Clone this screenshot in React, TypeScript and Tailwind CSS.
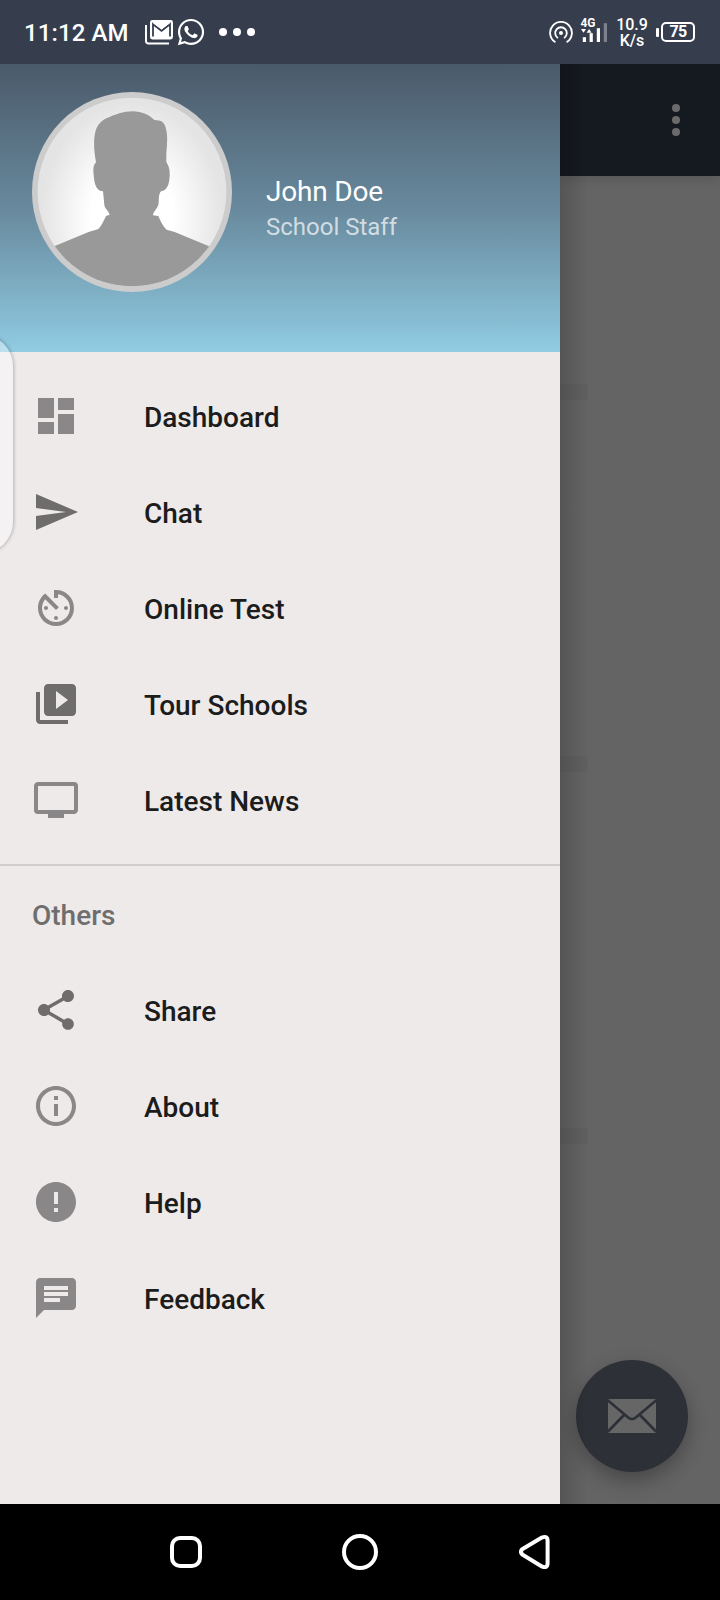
import type { IconType } from "react-icons";
import {
  MdAvTimer,
  MdChat,
  MdDashboard,
  MdError,
  MdInfoOutline,
  MdPersonalVideo,
  MdSend,
  MdShare,
  MdVideoLibrary,
} from "react-icons/md";
import { FaWhatsapp } from "react-icons/fa";

type Item = { label: string; icon: IconType; dark?: boolean };

const mainItems: Item[] = [
  { label: "Dashboard", icon: MdDashboard },
  { label: "Chat", icon: MdSend, dark: true },
  { label: "Online Test", icon: MdAvTimer },
  { label: "Tour Schools", icon: MdVideoLibrary, dark: true },
  { label: "Latest News", icon: MdPersonalVideo },
];

const otherItems: Item[] = [
  { label: "Share", icon: MdShare, dark: true },
  { label: "About", icon: MdInfoOutline },
  { label: "Help", icon: MdError },
  { label: "Feedback", icon: MdChat },
];

function MenuRow({ label, icon: Icon, dark }: Item) {
  return (
    <li className="flex h-24 items-center pl-8">
      <Icon className={dark ? "size-12 text-[#6e6d6c]" : "size-12 text-[#898787]"} />
      <span className="ml-16 pt-[3px] text-[28px] leading-8 font-medium text-[#1c1c1c]">{label}</span>
    </li>
  );
}

function StatusBar() {
  return (
    <header className="flex h-16 shrink-0 items-center bg-[#363e4e] text-white">
      <span className="ml-6 w-[106px] pt-[1px] text-[24px] leading-7 font-medium tracking-[0.1px] whitespace-nowrap">11:12 AM</span>
      <svg className="ml-[14px] h-7 w-[30px]" viewBox="0 0 30 28" fill="none">
        <path d="M2 7v16.2a2.3 2.3 0 0 0 2.3 2.3H25" stroke="currentColor" strokeWidth="2" />
        <rect x="6" y="2" width="23" height="19.4" rx="2.4" fill="currentColor" />
        <path d="M9 18.6V6.2l8.5 6.6L26 6.2v12.4" stroke="#363e4e" strokeWidth="1.8" />
        <path d="m9.2 4.8 8.3 6.2 8.3-6.2" stroke="currentColor" strokeWidth="1" />
      </svg>
      <FaWhatsapp className="ml-[2px] size-[30px]" />
      <svg className="ml-[13px] h-2 w-9" viewBox="0 0 36 8" fill="currentColor">
        <circle cx="4" cy="4" r="4" />
        <circle cx="18" cy="4" r="4" />
        <circle cx="32" cy="4" r="4" />
      </svg>
      <div className="ml-auto flex h-16 items-center pr-[25px]">
        <svg className="h-6 w-6" viewBox="0 0 24 24" fill="none" stroke="currentColor" strokeWidth="1.8" strokeLinecap="round">
          <circle cx="12" cy="13" r="2" fill="currentColor" stroke="none" />
          <path d="M8.4 17.6a5.8 5.8 0 1 1 7.2 0" />
          <path d="M5.8 21.8a10.9 10.9 0 1 1 12.4 0" />
        </svg>
        <svg className="ml-[7px] h-9 w-7" viewBox="0 0 28 36" fill="currentColor">
          <text x="0.5" y="13.2" fontSize="13" fontWeight="700" textLength="15" lengthAdjust="spacingAndGlyphs">4G</text>
          <path d="M1 15h5l-2.5 3.8zM6.6 18.8h5l-2.5-3.8z" />
          <rect x="2.8" y="23.2" width="3.2" height="4.8" />
          <rect x="9.6" y="19.2" width="3.2" height="8.8" />
          <rect x="16.8" y="14.2" width="3.2" height="13.8" />
          <rect x="23.8" y="9.2" width="3.2" height="18.8" opacity="0.35" />
        </svg>
        <div className="ml-[8px] w-8 pt-[1px] text-center text-[16px] leading-4 font-medium">
          <div>10.9</div>
          <div>K/s</div>
        </div>
        <span className="ml-2 h-[9px] w-[3px] rounded-[1px] bg-white" />
        <span className="ml-[2px] flex h-[20px] w-[34px] items-center justify-center rounded-[5px] border-2 border-white text-[16px] leading-4 font-bold tracking-[-0.8px]">
          75
        </span>
      </div>
    </header>
  );
}

function Avatar() {
  return (
    <svg className="size-[200px] shrink-0" viewBox="96 66 600 600">
      <defs>
        <radialGradient id="glow" gradientUnits="userSpaceOnUse" cx="396" cy="440" r="275" gradientTransform="translate(396 440) scale(1 1.25) translate(-396 -440)">
          <stop offset="0.45" stopColor="#ffffff" />
          <stop offset="1" stopColor="#e4e4e4" />
        </radialGradient>
        <clipPath id="disc">
          <circle cx="396" cy="366" r="283" />
        </clipPath>
      </defs>
      <circle cx="396" cy="366" r="300" fill="#cccccc" />
      <circle cx="396" cy="366" r="283" fill="url(#glow)" />
      <path
        clipPath="url(#disc)"
        fill="#999999"
        d="M398 124C425 124 449 136 463 150C484 151 493 155 498 176C504 200 501 225 499 250V276C507 289 510 300 509 318C508 345 500 362 483 364C474 374 478 391 475 405C470 419 460 424 459 436L475 438C482 455 489 470 500 479L524 486L640 534V680H150V534L264 487C276 482 287 481 295 477C306 466 312 450 318 438L329 434C325 421 314 416 313 405L309 364C291 362 285 347 282 326C280 301 277 289 288 277C283 250 280 220 284 196C288 170 300 154 319 145C345 134 370 124 398 124Z"
      />
    </svg>
  );
}

function DrawerHeader() {
  return (
    <div className="flex h-72 shrink-0 items-start bg-linear-to-b from-[#4a5a6a] via-[#68899d] to-[#90cce3] pt-7 pl-8">
      <Avatar />
      <div className="ml-[34px] pt-[83px]">
        <div className="text-[28px] leading-[34px] tracking-[-0.2px] text-white">John Doe</div>
        <div className="mt-[1px] text-[24px] leading-[34px] text-white/70">School Staff</div>
      </div>
    </div>
  );
}

function Strip() {
  return <div className="h-4 w-7 bg-[#606060]" />;
}

function Backdrop() {
  return (
    <main className="relative flex w-40 flex-col overflow-hidden bg-[#646464]">
      <div className="flex h-28 shrink-0 items-center justify-end bg-[#151920] pr-10 shadow-[0_2px_12px_rgba(0,0,0,0.15)]">
        <svg className="h-8 w-2" viewBox="0 0 8 32" fill="#6b6b6b">
          <circle cx="4" cy="4" r="4" />
          <circle cx="4" cy="16" r="4" />
          <circle cx="4" cy="28" r="4" />
        </svg>
      </div>
      <div className="flex flex-col gap-[356px] pt-52">
        <Strip />
        <Strip />
        <Strip />
      </div>
      <button aria-label="Mail" className="mt-auto mr-8 mb-8 ml-4 flex size-28 items-center justify-center rounded-full bg-[#2d3137] shadow-[0_8px_20px_rgba(0,0,0,0.3)]">
        <svg className="h-[34px] w-12" viewBox="0 0 48 34">
          <rect width="48" height="34" rx="1.5" fill="#666666" />
          <path d="M0 1.5 20.5 18.8Q24 21.6 27.5 18.8L48 1.5M0 32.5 16 16M48 32.5 32 16" fill="none" stroke="#2d3137" strokeWidth="2.7" />
        </svg>
      </button>
      <div className="absolute inset-y-0 left-0 w-7 bg-linear-to-r from-black/15 to-transparent" />
    </main>
  );
}

function NavigationBar() {
  return (
    <footer className="flex h-24 shrink-0 items-center justify-between bg-black px-[169px] text-white">
      <svg className="size-[34px]" viewBox="0 0 34 34" fill="none" stroke="currentColor" strokeWidth="4">
        <rect x="3" y="3" width="28" height="28" rx="8" />
      </svg>
      <svg className="mr-[2px] size-9" viewBox="0 0 36 36" fill="none" stroke="currentColor" strokeWidth="4">
        <circle cx="18" cy="18" r="16" />
      </svg>
      <svg className="h-9 w-8" viewBox="0 0 32 36" fill="none" stroke="currentColor" strokeWidth="4">
        <path d="M3.2 15.2 22.8 3.6Q28.6 1.2 28.6 7V29Q28.6 34.8 22.8 32.4L3.2 20.4Q.8 17.8 3.2 15.2Z" />
      </svg>
    </footer>
  );
}

export default function App() {
  return (
    <div className="relative flex h-[1600px] w-[720px] flex-col overflow-hidden font-[Roboto,sans-serif]">
      <StatusBar />
      <div className="flex flex-1">
        <aside className="flex w-[560px] flex-col bg-[#edeae9]">
          <DrawerHeader />
          <ul className="py-4">
            {mainItems.map((item) => (
              <MenuRow key={item.label} {...item} />
            ))}
          </ul>
          <div className="h-[2px] bg-[#d0cdcd]" />
          <h2 className="flex h-24 items-center pt-[4px] pl-8 text-[28px] font-medium text-[#6f6e6e]">Others</h2>
          <ul>
            {otherItems.map((item) => (
              <MenuRow key={item.label} {...item} />
            ))}
          </ul>
        </aside>
        <Backdrop />
      </div>
      <NavigationBar />
      <div className="absolute top-[335px] -left-[60px] h-[218px] w-[73px] rounded-[31px] bg-white/40 shadow-[0_0_4px_rgba(0,0,0,0.35)]" />
    </div>
  );
}
